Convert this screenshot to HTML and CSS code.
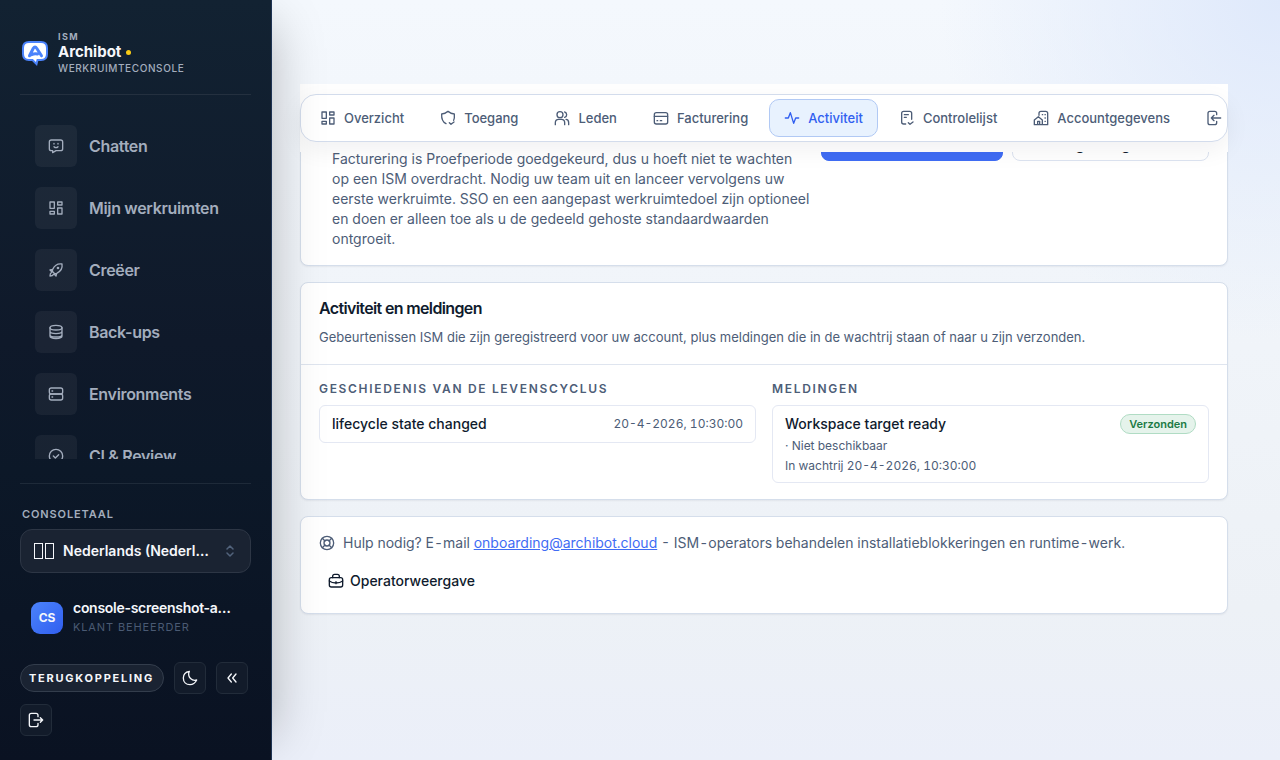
FILE: index.html
```html
<!DOCTYPE html>
<html lang="nl">
<head>
<meta charset="utf-8">
<meta name="viewport" content="width=device-width, initial-scale=1">
<title>Archibot Werkruimteconsole</title>
<link rel="stylesheet" href="styles.css">
</head>
<body>
<svg class="sprite" aria-hidden="true">
  <symbol id="grid" viewBox="0 0 24 24"><path d="M3 3h6.500v9.500H3zM14.500 3H21v4.500h-6.500zM14.500 12H21v9h-6.500zM3 17h6.500v4H3z"/></symbol>
  <symbol id="chat" viewBox="0 0 24 24"><path d="M5 3h14a3 3 0 0 1 3 3v10a3 3 0 0 1-3 3h-7l-5 3v-3H5a3 3 0 0 1-3-3V6a3 3 0 0 1 3-3zM9 8v1M15 8v1M9 13c2 2 4 2 6 0"/></symbol>
  <symbol id="rocket" viewBox="0 0 24 24"><path d="M7 11c3-6 8-9 14-8 1 6-2 11-8 14l-3 .5L6.500 14zM7 11l-4 1 3 3M13 17l-1 4-3-3M5 16c-2 1-2 3-2 5 2 0 4 0 5-2"/><circle cx="15" cy="9" r="1"/></symbol>
  <symbol id="database" viewBox="0 0 24 24"><ellipse cx="12" cy="5.500" rx="9" ry="3.500"/><path d="M3 5.500V18c0 5 18 5 18 0V5.500M3 11c0 4.500 18 4.500 18 0M3 16c0 4.500 18 4.500 18 0"/></symbol>
  <symbol id="server" viewBox="0 0 24 24"><rect x="2" y="3" width="20" height="9" rx="3"/><rect x="2" y="12" width="20" height="9" rx="3"/><path d="M6 7.500h1M6 16.500h1"/></symbol>
  <symbol id="check" viewBox="0 0 24 24"><circle cx="12" cy="12" r="10"/><path d="m8 12 3 3 5-5"/></symbol>
  <symbol id="shield" viewBox="0 0 24 24"><path d="M9 20.500C4 18 2 14 2.500 6 6 6 9 5 12 2c3 3 6 4 9.500 4 .3 4 .2 7-1 9.500M14 19l2.500 2.500L21 18"/></symbol>
  <symbol id="users" viewBox="0 0 24 24"><circle cx="9" cy="7" r="4.500"/><path d="M2 22v-3c0-3 2-5 5-5h4c3 0 5 2 5 5v3M16 3c4 1 4 7 0 8M18 14c3 0 4 2 4 5v3"/></symbol>
  <symbol id="card" viewBox="0 0 24 24"><rect x="2" y="4" width="20" height="17" rx="3"/><path d="M2 9.500h20M6 16h1M11 16h2"/></symbol>
  <symbol id="pulse" viewBox="0 0 24 24"><path d="M2 12h4.500l3-8 5 16 3-8H22"/></symbol>
  <symbol id="list" viewBox="0 0 24 24"><path d="M10 21H7a3 3 0 0 1-3-3V5a3 3 0 0 1 3-3h9a3 3 0 0 1 3 3v9M8 7h6M8 11h3M14 19l2.500 2.500L21 18"/></symbol>
  <symbol id="building" viewBox="0 0 24 24"><path d="M9 8V5a3 3 0 0 1 3-3h7a3 3 0 0 1 3 3v17H2v-7l6-5 6 5v7M7 22v-5h3v5M14 7h.5M18 7h.5M18 12h.5M18 17h.5"/></symbol>
  <symbol id="enter" viewBox="0 0 24 24"><path d="M16 7V5a3 3 0 0 0-3-3H6a3 3 0 0 0-3 3v14a3 3 0 0 0 3 3h7a3 3 0 0 0 3-3v-2M22 12H8M12 8l-4 4 4 4"/></symbol>
  <symbol id="leave" viewBox="0 0 24 24"><path d="M15 7V5a3 3 0 0 0-3-3H5a3 3 0 0 0-3 3v14a3 3 0 0 0 3 3h7a3 3 0 0 0 3-3v-2M9 12h13M18.500 8.500 22 12l-3.500 3.500"/></symbol>
  <symbol id="life" viewBox="0 0 24 24"><circle cx="12" cy="12" r="10"/><circle cx="12" cy="12" r="4.500"/><path d="m5 5 4 4M15 15l4 4M19 5l-4 4M9 15l-4 4"/></symbol>
  <symbol id="case" viewBox="0 0 24 24"><rect x="2" y="7" width="20" height="14" rx="3"/><path d="M7 7V5a3 3 0 0 1 3-3h4a3 3 0 0 1 3 3v2M2 12c5 4 15 4 20 0M12 13v3"/></symbol>
  <symbol id="moon" viewBox="0 0 24 24"><path d="M22 15C16 17 7 11 11 2 5 3 2 7 2 12c0 6 4 10 10 10 5 0 8-3 10-7z"/></symbol>
  <symbol id="collapse" viewBox="0 0 24 24"><path d="m11 6-5 6 5 6M18 6l-5 6 5 6"/></symbol>
  <symbol id="sort" viewBox="0 0 24 24"><path d="m6 8 6-6 6 6M6 16l6 6 6-6"/></symbol>
</svg>
<div class="app">
  <aside class="sidebar">
    <header class="brand">
      <svg class="logo" viewBox="0 0 28 28" aria-hidden="true">
        <path class="logo-bubble" d="M8 3h12q6 0 6 6v6q0 6-6 6h-3.500l-1 4-4-4H8q-6 0-6-6V9q0-6 6-6z"/>
        <path class="logo-mark" d="M8.500 16.800 12.300 9.300Q14 6.500 15.700 9.300L20.500 16.800M10.500 15.800Q13.500 14.200 16.500 15"/>
      </svg>
      <div class="brand-text">
        <span class="brand-over">ISM</span>
        <strong class="brand-name">Archibot<i class="brand-dot"></i></strong>
        <span class="brand-sub">WERKRUIMTECONSOLE</span>
      </div>
    </header>
    <nav class="nav" aria-label="Console">
      <a class="nav-item" href="#chatten"><span class="nav-icon"><svg class="icon"><use href="#chat"/></svg></span>Chatten</a>
      <a class="nav-item" href="#werkruimten"><span class="nav-icon"><svg class="icon"><use href="#grid"/></svg></span>Mijn werkruimten</a>
      <a class="nav-item" href="#creeer"><span class="nav-icon"><svg class="icon"><use href="#rocket"/></svg></span>Creëer</a>
      <a class="nav-item" href="#backups"><span class="nav-icon"><svg class="icon"><use href="#database"/></svg></span>Back-ups</a>
      <a class="nav-item" href="#environments"><span class="nav-icon"><svg class="icon"><use href="#server"/></svg></span>Environments</a>
      <a class="nav-item" href="#review"><span class="nav-icon"><svg class="icon"><use href="#check"/></svg></span>CI &amp; Review</a>
    </nav>
    <footer class="side-footer">
      <span class="lang-label" id="lang-label">CONSOLETAAL</span>
      <button class="lang" type="button" aria-haspopup="listbox" aria-labelledby="lang-label lang-value">
        <span class="flag"><i class="flag-box"></i><i class="flag-box"></i></span><span class="lang-value" id="lang-value">Nederlands (Nederland)</span><svg class="icon sort"><use href="#sort"/></svg>
      </button>
      <div class="user">
        <span class="avatar">CS</span>
        <div class="user-text"><span class="user-name">console-screenshot-admin</span><span class="user-role">KLANT BEHEERDER</span></div>
      </div>
      <div class="tools">
        <button class="feedback" type="button">TERUGKOPPELING</button>
        <button class="tool" type="button" aria-label="Donker thema"><svg class="icon"><use href="#moon"/></svg></button>
        <button class="tool" type="button" aria-label="Inklappen"><svg class="icon"><use href="#collapse"/></svg></button>
        <button class="tool" type="button" aria-label="Uitloggen"><svg class="icon"><use href="#leave"/></svg></button>
      </div>
    </footer>
  </aside>
  <main class="main">
    <div class="tab-band">
      <nav class="tabs" aria-label="Onboarding">
        <a class="tab" href="#overzicht"><svg class="icon"><use href="#grid"/></svg>Overzicht</a>
        <a class="tab" href="#toegang"><svg class="icon"><use href="#shield"/></svg>Toegang</a>
        <a class="tab" href="#leden"><svg class="icon"><use href="#users"/></svg>Leden</a>
        <a class="tab" href="#facturering"><svg class="icon"><use href="#card"/></svg>Facturering</a>
        <a class="tab tab-active" href="#activiteit" aria-current="page"><svg class="icon"><use href="#pulse"/></svg>Activiteit</a>
        <a class="tab" href="#controlelijst"><svg class="icon"><use href="#list"/></svg>Controlelijst</a>
        <a class="tab" href="#accountgegevens"><svg class="icon"><use href="#building"/></svg>Accountgegevens</a>
        <a class="tab" href="#verlaten" aria-label="Verlaten"><svg class="icon"><use href="#enter"/></svg></a>
      </nav>
    </div>
    <section class="card intro">
      <p class="intro-text">Facturering is Proefperiode goedgekeurd, dus u hoeft niet te wachten op een ISM overdracht. Nodig uw team uit en lanceer vervolgens uw eerste werkruimte. SSO en een aangepast werkruimtedoel zijn optioneel en doen er alleen toe als u de gedeeld gehoste standaardwaarden ontgroeit.</p>
      <div class="intro-actions">
        <button class="btn btn-primary" type="button"><svg class="icon"><use href="#rocket"/></svg>Werkruimte creëren</button>
        <button class="btn btn-outline" type="button"><svg class="icon"><use href="#users"/></svg>Nodig teamgenoten uit</button>
      </div>
    </section>
    <section class="card" id="activiteit">
      <header class="card-head">
        <h2 class="card-title">Activiteit en meldingen</h2>
        <p class="card-desc">Gebeurtenissen ISM die zijn geregistreerd voor uw account, plus meldingen die in de wachtrij staan of naar u zijn verzonden.</p>
      </header>
      <div class="columns">
        <div class="column">
          <h3 class="col-title">GESCHIEDENIS VAN DE LEVENSCYCLUS</h3>
          <div class="entry"><div class="entry-row"><span class="entry-title">lifecycle state changed</span><time class="meta">20-4-2026, 10:30:00</time></div></div>
        </div>
        <div class="column">
          <h3 class="col-title">MELDINGEN</h3>
          <div class="entry">
            <div class="entry-row"><span class="entry-title">Workspace target ready</span><span class="badge">Verzonden</span></div>
            <div class="entry-lines">
              <p class="meta">· Niet beschikbaar</p>
              <p class="meta">In wachtrij 20-4-2026, 10:30:00</p>
            </div>
          </div>
        </div>
      </div>
    </section>
    <section class="card help">
      <p class="help-line"><svg class="icon"><use href="#life"/></svg><span>Hulp nodig? E-mail <a class="link" href="mailto:onboarding@archibot.cloud">onboarding@archibot.cloud</a> - ISM-operators behandelen installatieblokkeringen en runtime-werk.</span></p>
      <button class="operator" type="button"><svg class="icon"><use href="#case"/></svg>Operatorweergave</button>
    </section>
  </main>
</div>
</body>
</html>
```
FILE: styles.css
```css
* { box-sizing: border-box; }
body, h2, h3, p { margin: 0; }
body { font: 400 14px/20px Inter, sans-serif; color: #0f1b2d; }
button { font: inherit; color: inherit; cursor: pointer; }
a { color: inherit; text-decoration: none; }
.sprite { position: absolute; width: 0; height: 0; }
.icon { width: 16px; height: 16px; flex: none; fill: none; stroke: currentColor; stroke-width: 2; stroke-linejoin: round; stroke-linecap: round; }

.app {
  display: flex; height: 100vh; overflow: hidden;
  background:
    radial-gradient(circle at 100% 0, #dfe9fb 0, rgba(223, 233, 251, 0) 340px),
    linear-gradient(180deg, #f4f8fd 0, #edf1f6 80%, #ebeff9 100%);
}

/* Sidebar */
.sidebar {
  position: relative; z-index: 3; width: 272px; flex: none;
  display: flex; flex-direction: column; padding: 32px 20px 24px;
  color: #f5f7fb; border-right: 1px solid #1e3353;
  background: linear-gradient(180deg, #122232 0, #0f192a 45%, #0c1828 62%, #0a1222 100%);
  box-shadow: 24px 0 48px -24px rgba(0, 0, 0, 0.26);
}
.brand { display: flex; align-items: center; gap: 8px; padding: 0 0 20px 1px; border-bottom: 1px solid #24303f; }
.logo { width: 28px; height: 28px; }
.logo-bubble { fill: #fff; stroke: #4b83fb; stroke-width: 2; }
.logo-mark { fill: none; stroke: #4b83fb; stroke-width: 3; stroke-linecap: round; }
.brand-text { display: flex; flex-direction: column; padding-left: 1px; }
.brand-over { font-size: 9px; line-height: 10px; font-weight: 700; letter-spacing: 0.16em; color: #a3adbd; }
.brand-name { display: flex; align-items: center; gap: 5px; font-size: 15px; line-height: 20px; font-weight: 700; }
.brand-dot { width: 5px; height: 5px; border-radius: 50%; background: #facc15; }
.brand-sub { font-size: 10px; line-height: 12px; font-weight: 500; letter-spacing: 0.06em; color: #a3adbd; }
.nav { flex: 1; min-height: 0; overflow: hidden; margin: 20px 0 24px; }
.nav-item { display: flex; align-items: center; gap: 12px; padding: 10px 15px; font-size: 16px; font-weight: 600; letter-spacing: -0.02em; color: #a3adbd; }
.nav-icon { display: grid; place-items: center; width: 42px; height: 42px; border-radius: 6px; background: rgba(255, 255, 255, 0.05); }
.side-footer { display: flex; flex-direction: column; border-top: 1px solid #1e2a39; padding-top: 22px; }
.lang-label { padding-left: 2px; font-size: 11px; line-height: 16px; font-weight: 600; letter-spacing: 0.08em; color: #a3adbd; }
.lang { display: flex; align-items: center; height: 44px; margin-top: 7px; padding: 0 14px 0 13px; border: 1px solid #2d3645; border-radius: 12px; background: #1a2332; font-weight: 600; text-align: left; }
.flag { display: flex; gap: 2px; flex: none; margin-right: 9px; }
.flag-box { width: 9px; height: 16px; border: 1px solid currentColor; }
.lang-value { flex: 1; min-width: 0; overflow: hidden; text-overflow: ellipsis; white-space: nowrap; }
.sort { width: 12px; height: 12px; margin-left: 12px; stroke-width: 3; color: #52637c; }
.user { display: flex; align-items: center; gap: 10px; margin-top: 24px; padding: 0 12px 0 11px; }
.avatar { display: grid; place-items: center; width: 32px; height: 32px; flex: none; border-radius: 9px; background: linear-gradient(135deg, #4b83fb, #315ff0); font-size: 12px; font-weight: 700; }
.user-text { min-width: 0; display: flex; flex-direction: column; padding-bottom: 4px; }
.user-name { font-weight: 600; line-height: 22px; letter-spacing: -0.02em; overflow: hidden; text-overflow: ellipsis; white-space: nowrap; }
.user-role { font-size: 11px; line-height: 16px; letter-spacing: 0.08em; color: #4a5a73; }
.tools { display: flex; flex-wrap: wrap; align-items: center; gap: 10px; margin-top: 23px; }
.feedback { height: 28px; padding: 0 9px 0 8px; border: 1px solid #333d4c; border-radius: 14px; background: #1a2332; font-size: 11px; font-weight: 700; letter-spacing: 0.16em; }
.tool { display: grid; place-items: center; width: 32px; height: 32px; padding: 0; border: 1px solid #222c3a; border-radius: 6px; background: #121b2a; }

/* Content */
.main { flex: 1; min-width: 0; padding: 84px 52px 40px 28px; }
.tab-band { position: relative; z-index: 2; padding: 10px 0; background: #fff; }
.tabs { display: flex; gap: 6px; padding: 4px; overflow: hidden; border: 1px solid #d3dcec; border-radius: 16px; background: #fff; box-shadow: 0 8px 24px rgba(15, 23, 42, 0.06); }
.tab { display: flex; align-items: center; flex: none; gap: 8px; height: 38px; padding: 0 14px; border: 1px solid transparent; border-radius: 10px; font-size: 13px; font-weight: 500; color: #4d5d77; }
.tab-active { color: #315ff0; background: #e8f2fe; border-color: #b1c9f4; }
.card { margin-bottom: 16px; border: 1px solid #d5deeb; border-radius: 8px; background: #fff; box-shadow: 0 1px 2px rgba(15, 23, 42, 0.06); }
.intro { display: flex; justify-content: space-between; align-items: flex-start; gap: 8px; margin-top: -48px; padding: 24px 18px 16px 31px; }
.intro-text { flex: 1; padding-top: 20px; color: #4d5d77; }
.intro-actions { display: flex; gap: 9px; }
.btn { display: flex; align-items: center; gap: 6px; height: 32px; padding: 0 11px; border: 1px solid #dce3f0; border-radius: 8px; background: #fff; font-weight: 500; white-space: nowrap; }
.btn .icon { width: 14px; height: 14px; }
.btn-primary { padding: 0 14px; background: #3f6cf4; border-color: #3f6cf4; color: #fff; }
.card-head { padding: 15px 18px 17px; border-bottom: 1px solid #dfe5ef; }
.card-title { font-size: 16px; line-height: 20px; font-weight: 600; letter-spacing: -0.04em; }
.card-desc { margin-top: 9px; font-size: 13px; color: #4d5d77; }
.columns { display: grid; grid-template-columns: 1fr 1fr; gap: 16px; align-items: start; padding: 16px 18px; }
.col-title { margin-bottom: 8px; font-size: 12px; line-height: 16px; font-weight: 600; letter-spacing: 0.14em; color: #4d5d77; }
.entry { padding: 8px 12px; border: 1px solid #e4e8f3; border-radius: 6px; }
.entry-row { display: flex; align-items: center; justify-content: space-between; gap: 12px; }
.entry-title { font-weight: 500; }
.meta { font-size: 12px; line-height: 18px; font-variant-numeric: tabular-nums; color: #4d5d77; }
.entry-lines { display: grid; gap: 2px; padding-top: 3px; margin-bottom: -1px; }
.badge { padding: 0 8px; border: 1px solid #b0dcc4; border-radius: 10px; background: #e5f3eb; color: #1b7a45; font-size: 11px; line-height: 18px; font-weight: 600; }
.help { padding: 16px 18px; }
.help-line { display: flex; align-items: center; gap: 8px; font-variant-numeric: tabular-nums; color: #4d5d77; }
.link { color: #3f6cf4; text-decoration: underline; }
.operator { display: flex; align-items: center; gap: 6px; height: 32px; margin-top: 12px; padding: 0 9px; border: 0; background: none; font-weight: 500; }
```
